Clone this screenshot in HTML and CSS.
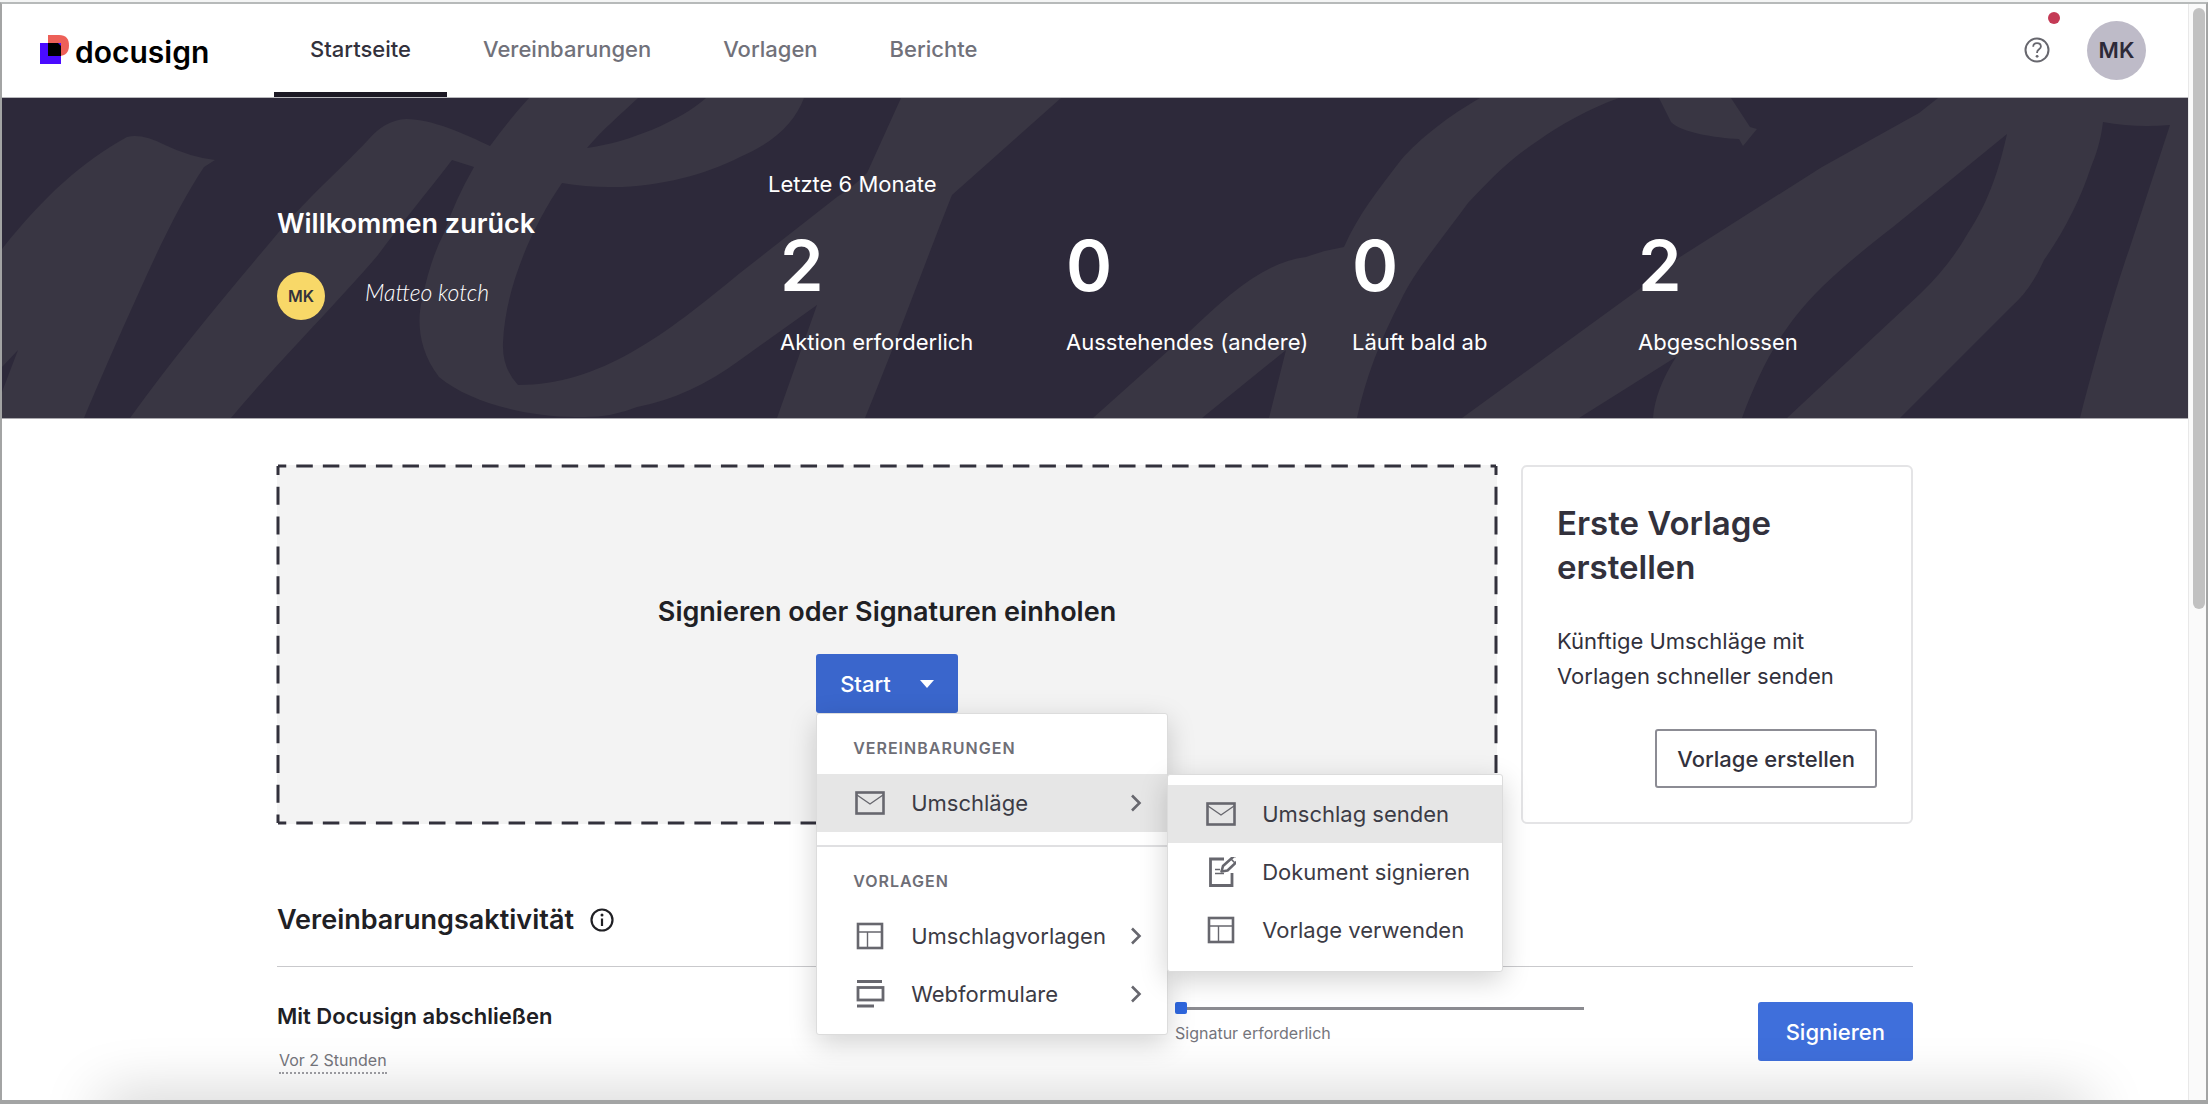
FILE: index.html
```html
<!DOCTYPE html>
<html lang="de">
<head>
<meta charset="utf-8">
<meta name="viewport" content="width=device-width, initial-scale=1">
<title>Docusign – Startseite</title>
<link rel="stylesheet" href="styles.css">
</head>
<body>
<svg class="sprite" aria-hidden="true">
  <symbol id="icon-envelope" viewBox="0 0 30 30">
    <rect x="1.500" y="4.500" width="27" height="21" fill="none" stroke="currentColor" stroke-width="2.600"/>
    <path d="M2 7 L15 16 L28 7" fill="none" stroke="currentColor" stroke-width="1.400"/>
  </symbol>
  <symbol id="icon-template" viewBox="0 0 30 30">
    <rect x="3" y="3" width="24" height="24" fill="none" stroke="currentColor" stroke-width="2.600"/>
    <path d="M3 11H27M12.500 11V27" fill="none" stroke="currentColor" stroke-width="1.400"/>
  </symbol>
  <symbol id="icon-form" viewBox="0 0 30 30">
    <path d="M2 2.500H27M2 27H19" fill="none" stroke="currentColor" stroke-width="2.800"/>
    <rect x="3" y="8.500" width="25" height="12.500" fill="none" stroke="currentColor" stroke-width="2.800"/>
  </symbol>
  <symbol id="icon-sign" viewBox="0 0 30 30">
    <path d="M18 2H4.500V28.500H26V16" fill="none" stroke="currentColor" stroke-width="2.800"/>
    <path d="M15.500 14.500 L17 9 L27 0 A2.800 2.800 0 0 1 31.500 4 L21.500 13.500 Z" fill="none" stroke="currentColor" stroke-width="2.600" stroke-linejoin="round"/>
    <path d="M25 2 L29 6" stroke="currentColor" stroke-width="1.600"/>
    <path d="M9 12.500H14M9 16.500H18" stroke="currentColor" stroke-width="1.400"/>
  </symbol>
  <symbol id="icon-chevron" viewBox="0 0 12 18">
    <path d="M2 1.500 L9.500 9 L2 16.500" fill="none" stroke="currentColor" stroke-width="2.600"/>
  </symbol>
</svg>

<div class="window">
  <div class="page">
    <header class="topbar">
      <a class="brand" href="#">
        <svg class="brand-mark" viewBox="0 0 29 29" aria-hidden="true">
          <path d="M8 0H19C26 0 29 4 29 10.500S25.500 21 19 21H8Z" fill="#ed6058"/>
          <rect y="8" width="21" height="21" fill="#4a0bff"/>
          <path d="M8 8H18L21 11V21H8Z" fill="#000"/>
        </svg>
        <span>docusign</span>
      </a>
      <nav class="nav">
        <a class="nav-link is-active" href="#">Startseite</a>
        <a class="nav-link" href="#">Vereinbarungen</a>
        <a class="nav-link" href="#">Vorlagen</a>
        <a class="nav-link" href="#">Berichte</a>
      </nav>
      <div class="account">
        <button class="help" type="button" aria-label="Hilfe">
          <svg viewBox="0 0 26 26" width="26" height="26" aria-hidden="true">
            <circle cx="13" cy="13" r="11.500" fill="none" stroke="currentColor" stroke-width="2"/>
            <path d="M9.200 9.800C9.200 7.600 10.800 6.200 13 6.200S16.900 7.500 16.900 9.600C16.900 12.400 13.100 12.300 13.100 15.300V16" fill="none" stroke="currentColor" stroke-width="1.800"/>
            <circle cx="13.100" cy="19.300" r="1.400" fill="currentColor"/>
          </svg>
          <span class="alert-dot"></span>
        </button>
        <button class="avatar avatar-large" type="button">MK</button>
      </div>
    </header>

    <section class="banner">
      <svg class="banner-art" viewBox="2 98 2186 320" preserveAspectRatio="none" aria-hidden="true">
        <path d="M2 249C45 195 82 162 127 137Q142 133 165 145Q190 157 215 160L204 167C182 200 160 245 140 290C115 345 98 385 84 418H2V392L18 350L2 367Z"/>
        <path d="M130 418C175 355 230 290 278 233C310 195 345 165 368 140Q385 120 406 119C432 119 465 134 490 146C502 130 515 113 529 98H638C620 115 602 130 587 148C630 142 680 121 706 98H804C795 122 775 142 740 157C705 175 655 188 609 187Q585 187 562 183C530 230 505 290 503 343Q502 368 518 385C600 385 665 335 740 273L837 197Q852 188 867 173L901 98H1061L952 195C930 250 895 345 865 418H777L817 305L740 360Q690 397 637 407Q610 418 580 417C530 418 470 403 439 377C418 350 417 320 422 300Q430 260 444 233Q455 200 474 167L452 160C425 195 400 225 378 255C340 300 275 365 231 418Z"/>
        <path d="M1480 98H1619C1590 108 1560 125 1539 140C1508 160 1488 182 1468 203C1445 235 1415 270 1401 300C1380 340 1365 380 1357 418H1269L1286 350L1202 418H1093L1188 333C1230 293 1265 262 1306 257Q1325 250 1344 247C1358 215 1378 190 1401 160C1420 138 1450 115 1480 98Z"/>
        <path d="M1659 98H1731L1750 127L1757 129L1743 146L1739 139C1715 138 1680 132 1671 122Z"/>
        <path d="M1462 418L1638 290L1680 257L1822 167L1919 113L1938 98H2188V418H2080C2100 340 2120 275 2129 250L2170 125Q2135 128 2103 122C2101 140 2096 155 2091 167C2080 200 2065 230 2044 260C2035 280 2025 295 2011 307L1900 418H1787L1921 293Q1950 265 1968 233C1990 200 2000 165 2007 134L1893 227Q1850 260 1822 287C1780 328 1760 370 1742 418H1653Q1655 390 1676 357L1579 418Z"/>
      </svg>
      <div class="banner-inner">
        <div class="welcome">
          <h1>Willkommen zurück</h1>
          <div class="identity">
            <span class="avatar avatar-small">MK</span>
            <span class="signature">Matteo kotch</span>
          </div>
        </div>
        <div class="overview">
          <p class="period">Letzte 6 Monate</p>
          <div class="stats">
            <a class="stat" href="#"><strong>2</strong><span>Aktion erforderlich</span></a>
            <a class="stat" href="#"><strong>0</strong><span>Ausstehendes (andere)</span></a>
            <a class="stat" href="#"><strong>0</strong><span>Läuft bald ab</span></a>
            <a class="stat" href="#"><strong>2</strong><span>Abgeschlossen</span></a>
          </div>
        </div>
      </div>
    </section>

    <main class="content">
      <div class="cards">
        <section class="dropzone">
          <svg class="dashes" aria-hidden="true">
            <g stroke-dasharray="16.500 10.040" stroke-dashoffset="8.250">
              <line x1="0" y1="0" x2="100%" y2="0"/>
              <line x1="0" y1="100%" x2="100%" y2="100%"/>
            </g>
            <g stroke-dasharray="18 11.800" stroke-dashoffset="9">
              <line x1="0" y1="0" x2="0" y2="100%"/>
              <line x1="100%" y1="0" x2="100%" y2="100%"/>
            </g>
          </svg>
          <h2>Signieren oder Signaturen einholen</h2>
          <div class="start">
            <button class="button button-start" type="button" aria-expanded="true">Start
              <svg width="14" height="8" viewBox="0 0 14 8" aria-hidden="true"><path d="M0 0H14L7 8Z" fill="#fff"/></svg>
            </button>
            <div class="menu">
              <p class="menu-title">VEREINBARUNGEN</p>
              <div class="menu-row">
                <button class="menu-item is-current" type="button">
                  <svg class="menu-icon"><use href="#icon-envelope"/></svg>Umschläge
                  <svg class="chevron"><use href="#icon-chevron"/></svg>
                </button>
                <div class="menu submenu">
                  <button class="menu-item is-current" type="button"><svg class="menu-icon"><use href="#icon-envelope"/></svg>Umschlag senden</button>
                  <button class="menu-item" type="button"><svg class="menu-icon"><use href="#icon-sign"/></svg>Dokument signieren</button>
                  <button class="menu-item" type="button"><svg class="menu-icon"><use href="#icon-template"/></svg>Vorlage verwenden</button>
                </div>
              </div>
              <hr class="menu-divider">
              <p class="menu-title">VORLAGEN</p>
              <button class="menu-item" type="button">
                <svg class="menu-icon"><use href="#icon-template"/></svg>Umschlagvorlagen
                <svg class="chevron"><use href="#icon-chevron"/></svg>
              </button>
              <button class="menu-item" type="button">
                <svg class="menu-icon"><use href="#icon-form"/></svg>Webformulare
                <svg class="chevron"><use href="#icon-chevron"/></svg>
              </button>
            </div>
          </div>
        </section>

        <section class="template-card">
          <h2>Erste Vorlage erstellen</h2>
          <p>Künftige Umschläge mit Vorlagen schneller senden</p>
          <button class="button button-outline" type="button">Vorlage erstellen</button>
        </section>
      </div>

      <section class="activity">
        <h2>Vereinbarungsaktivität
          <svg width="24" height="24" viewBox="0 0 24 24" aria-hidden="true">
            <circle cx="12" cy="12" r="10.500" fill="none" stroke="currentColor" stroke-width="2.200"/>
            <path d="M12 10.500V18" stroke="currentColor" stroke-width="2.200"/>
            <circle cx="12" cy="7" r="1.500" fill="currentColor"/>
          </svg>
        </h2>
        <div class="activity-row">
          <div>
            <h3>Mit Docusign abschließen</h3>
            <span class="age">Vor 2 Stunden</span>
          </div>
          <div class="status">
            <div class="track"><span class="knob"></span></div>
            <p>Signatur erforderlich</p>
          </div>
          <button class="button button-primary" type="button">Signieren</button>
        </div>
      </section>
    </main>
    <div class="bottom-shade"></div>
  </div>
  <div class="scrollbar"><div class="thumb"></div></div>
</div>
</body>
</html>
```
FILE: styles.css
```css
* { box-sizing: border-box; }

body {
  margin: 0;
  padding-top: 2px;
  font-family: Inter, "Liberation Sans", sans-serif;
  font-size: 22px;
  line-height: 32px;
  color: #32313c;
  background: #f4f5f5;
}

h1, h2, h3, p { margin: 0; }
a { color: inherit; text-decoration: none; }
button { font: inherit; color: inherit; border: 0; padding: 0; background: none; }
.sprite { position: absolute; width: 0; height: 0; }

.window {
  display: flex;
  height: calc(100vh - 2px);
  border: 2px solid #a3a4a4;
  border-top-color: #b7baba;
  border-bottom-width: 4px;
  background: #fff;
}
.page {
  position: relative;
  flex: 1;
  min-width: 0;
  overflow: hidden;
}
.scrollbar {
  width: 18px;
  padding: 4px 1px 0 4px;
  border-left: 1px solid #e8e8e8;
  background: #fafafa;
}
.thumb {
  height: 55%;
  border-radius: 6px;
  background: #c1c1c1;
}

/* Top bar */
.topbar {
  display: flex;
  height: 94px;
  border-bottom: 1px solid #b9b9bd;
}
.brand {
  display: flex;
  align-items: center;
  gap: 6px;
  flex: 0 0 272px;
  padding: 2px 0 0 38px;
  color: #000;
  font-size: 30px;
  font-weight: 600;
}
.brand-mark { width: 29px; height: 29px; margin-bottom: 4px; }
.nav { display: flex; }
.nav-link {
  display: flex;
  align-items: center;
  padding: 2px 36px 0;
  border-bottom: 5px solid transparent;
  font-weight: 500;
  color: #71717a;
}
.nav-link.is-active { color: #32313c; border-bottom-color: #1c1924; }
.account {
  display: flex;
  align-items: center;
  gap: 37px;
  margin-left: auto;
  padding-right: 42px;
  padding-bottom: 1px;
}
.help { position: relative; height: 26px; color: #67676e; }
.help svg { display: block; }
.alert-dot {
  position: absolute;
  top: -25px;
  right: -10px;
  width: 12px;
  height: 12px;
  border-radius: 50%;
  background: #c43a55;
}
.avatar {
  display: flex;
  align-items: center;
  justify-content: center;
  border-radius: 50%;
  font-weight: 600;
}
.avatar-large { width: 59px; height: 59px; background: #bebbc8; color: #2d2a38; }
.avatar-small { width: 48px; height: 48px; background: #f8d868; color: #32313c; font-size: 16px; }

/* Welcome banner */
.banner {
  position: relative;
  color: #fff;
  background: #2d293a;
  border-bottom: 1px solid #aaa9ae;
}
.banner-art {
  position: absolute;
  width: 100%;
  height: 100%;
  fill: #393643;
}
.banner-inner {
  position: relative;
  display: flex;
  max-width: 1636px;
  min-height: 320px;
  margin: 0 auto;
}
.welcome { flex: 0 0 491px; padding-top: 110px; }
.welcome h1 { font-size: 27px; line-height: 32px; font-weight: 600; }
.identity { display: flex; align-items: center; gap: 40px; margin-top: 32px; }
.signature {
  padding-bottom: 8px;
  font-family: Lato, cursive;
  font-weight: 300;
  font-style: italic;
  font-size: 23px;
}
.overview { flex: 1; padding-top: 70px; }
.stats {
  display: grid;
  grid-template-columns: repeat(3, 286px) 1fr;
  margin-top: 26px;
  padding-left: 12px;
}
.stat { display: flex; flex-direction: column; gap: 20px; white-space: nowrap; }
.stat strong { font-size: 70px; line-height: 80px; font-weight: 600; }

/* Content */
.content { max-width: 1636px; margin: 0 auto; padding-top: 46px; }
.cards { display: grid; grid-template-columns: 1fr 392px; gap: 24px; }
.dropzone {
  position: relative;
  display: flex;
  flex-direction: column;
  align-items: center;
  gap: 26px;
  padding-top: 131px;
  border-radius: 6px;
  background: #f3f3f3;
  color: #202024;
}
.dashes {
  position: absolute;
  top: 1px;
  left: 1px;
  width: calc(100% - 2px);
  height: calc(100% - 2px);
  overflow: visible;
  stroke: #32313c;
  stroke-width: 3;
}
.dropzone h2, .activity h2 { font-size: 27px; font-weight: 600; }
.start { position: relative; }

.button {
  height: 59px;
  padding: 0 20px;
  border-radius: 3px;
  font-weight: 500;
}
.button-start {
  display: flex;
  align-items: center;
  gap: 29px;
  padding: 0 24px;
  background: #3a66cc;
  color: #fff;
}
.button-primary { padding: 0 28px; background: #3f6fdb; color: #fff; }
.button-outline { border: 2px solid #8c8c94; background: #fff; }

.menu {
  position: absolute;
  z-index: 2;
  top: 100%;
  left: 0;
  width: 352px;
  padding-bottom: 11px;
  border: 1px solid #dcdcdc;
  border-radius: 3px;
  background: #fff;
  box-shadow: 0 8px 28px rgba(0, 0, 0, 0.18);
}
.menu-title {
  padding: 22px 36px 14px;
  font-size: 16px;
  line-height: 24px;
  font-weight: 600;
  letter-spacing: 1px;
  color: #6e6e76;
}
.menu-row { position: relative; }
.menu-item {
  display: flex;
  align-items: center;
  gap: 26px;
  width: 100%;
  height: 58px;
  padding: 0 25px 0 38px;
  color: #3c3b45;
  text-align: left;
  white-space: nowrap;
}
.menu-item.is-current { background: #e6e6e6; }
.menu-icon { flex: none; width: 30px; height: 30px; overflow: visible; color: #67676e; }
.chevron { flex: none; width: 12px; height: 18px; margin-left: auto; color: #67676e; }
.menu-item:has(.chevron) { gap: 18px; }
.menu-item:has(.chevron) .menu-icon { margin-right: 8px; }
.menu-divider { height: 2px; margin: 13px 0 0; border: 0; background: #e0e0e2; }
.submenu { top: 0; left: 100%; width: 336px; padding: 10px 0 12px; }

.template-card {
  padding: 34px;
  border: 2px solid #e4e4e6;
  border-radius: 6px;
}
.template-card h2 { font-size: 33px; line-height: 44px; font-weight: 600; }
.template-card p { margin: 35px 0; line-height: 35px; }
.template-card .button { display: block; margin-left: auto; }

/* Activity */
.activity { margin-top: 78px; color: #202024; }
.activity h2 {
  display: flex;
  align-items: center;
  gap: 16px;
  padding-bottom: 28px;
  border-bottom: 1px solid #c9c9cc;
  line-height: 36px;
}
.activity-row {
  display: grid;
  grid-template-columns: 898fr 409fr 329fr;
  align-items: start;
  padding-top: 35px;
}
.activity h3 { font-size: 22px; line-height: 28px; font-weight: 600; }
.age {
  display: inline-block;
  margin: 18px 0 0 2px;
  border-bottom: 2px dotted #a0a0a5;
  font-size: 16px;
  line-height: 24px;
  color: #75757c;
}
.track {
  display: flex;
  align-items: center;
  height: 12px;
  background: linear-gradient(#8b8b90, #8b8b90) center / 100% 3px no-repeat;
}
.knob { width: 12px; height: 12px; border-radius: 2px; background: #2f68e0; }
.status p { margin-top: 7px; font-size: 16px; line-height: 24px; color: #75757c; }
.activity-row .button { justify-self: end; }

.bottom-shade {
  position: absolute;
  right: 110px;
  bottom: -28px;
  left: 110px;
  height: 20px;
  box-shadow: 0 0 60px 10px rgba(0, 0, 0, 0.22);
}
```
